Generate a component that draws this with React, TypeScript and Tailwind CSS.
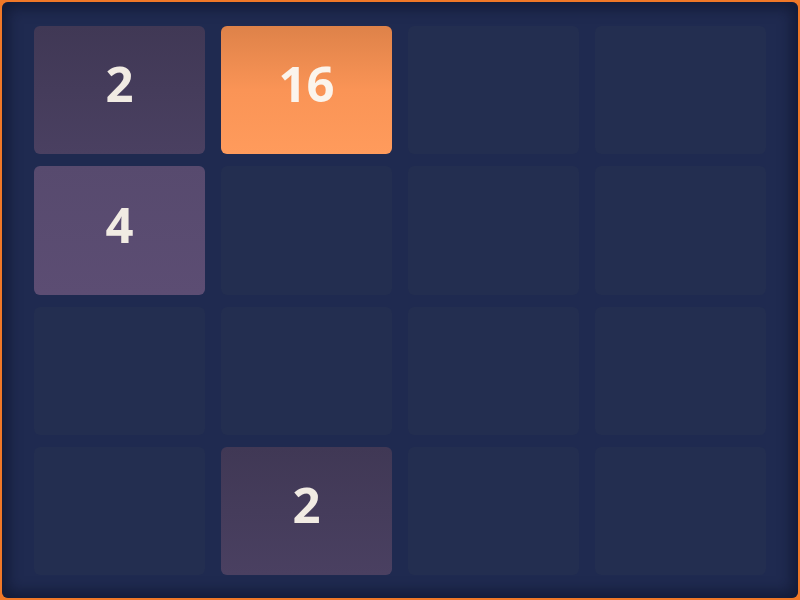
import React from 'react';

type Cell = number | null;

const board: Cell[][] = [
  [2, 16, null, null],
  [4, null, null, null],
  [null, null, null, null],
  [null, 2, null, null],
];

function tileClass(v: Cell): string {
  if (v === 2) return 'bg-gradient-to-b from-[#403855] to-[#4a4061] text-[#f1ebe3]';
  if (v === 4) return 'bg-gradient-to-b from-[#574a6e] to-[#5c4d73] text-[#f1ebe3]';
  if (v === 16) return 'bg-gradient-to-b from-[#de8249] via-[#fa9456] to-[#ff9b5c] text-[#fbf4ec]';
  return 'bg-[#232e50]';
}

export default function App() {
  return (
    <div className="w-[800px] h-[600px] bg-[#f07828] p-[2px]">
      <div className="w-full h-full rounded-md bg-[#1f2a50] shadow-[inset_0_0_14px_6px_rgba(10,14,35,0.55)] px-[32px] pt-[24px] pb-[23px]">
        <div className="grid grid-cols-4 grid-rows-4 gap-x-[16px] gap-y-[12px] h-full">
          {board.flat().map((v, i) => (
            <div
              key={i}
              className={`rounded-md flex items-center justify-center pb-[12px] text-[49px] font-bold ${tileClass(v)}`}
              style={{ fontFamily: '"Open Sans", "Noto Sans", sans-serif' }}
            >
              {v ?? ''}
            </div>
          ))}
        </div>
      </div>
    </div>
  );
}
